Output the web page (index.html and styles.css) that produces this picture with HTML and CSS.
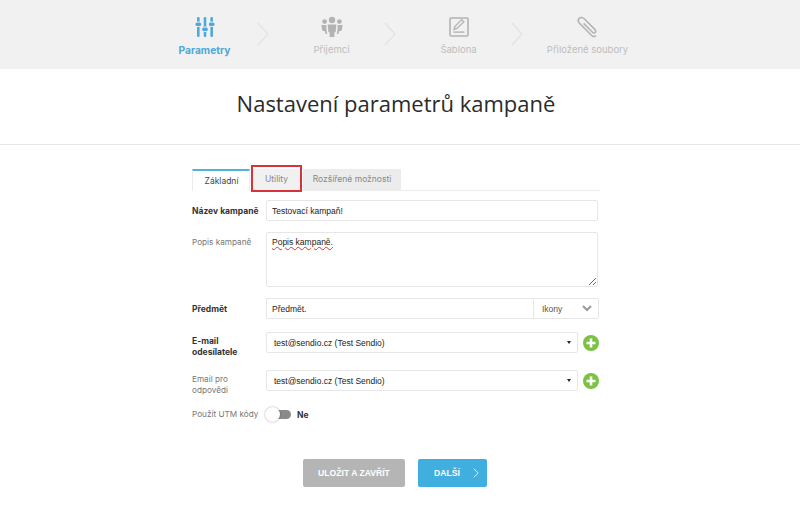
FILE: index.html
```html
<!DOCTYPE html>
<html lang="cs">
<head>
    <meta charset="UTF-8">
    <title>Nastavení parametrů kampaně</title>
    <link rel="stylesheet" href="styles.css">
</head>
<body>
    <!-- Steps -->
    <div class="steps">
        <div class="step active">
            <svg class="step-icon" width="24" height="24" viewBox="0 0 24 24">
                <g fill="#4fa8da">
                    <rect x="4" y="2" width="2.6" height="20" rx="1.2"/>
                    <rect x="10.7" y="2" width="2.6" height="20" rx="1.2"/>
                    <rect x="17.4" y="2" width="2.6" height="20" rx="1.2"/>
                    <rect x="2.5" y="7.6" width="5.6" height="3.4" rx="1.5"/>
                    <rect x="9.2" y="12.6" width="5.6" height="3.4" rx="1.5"/>
                    <rect x="15.9" y="7.6" width="5.6" height="3.4" rx="1.5"/>
                </g>
                <g fill="#f1f1f1">
                    <rect x="4" y="6.6" width="2.6" height="1"/>
                    <rect x="4" y="11" width="2.6" height="1"/>
                    <rect x="10.7" y="11.6" width="2.6" height="1"/>
                    <rect x="10.7" y="16" width="2.6" height="1"/>
                    <rect x="17.4" y="6.6" width="2.6" height="1"/>
                    <rect x="17.4" y="11" width="2.6" height="1"/>
                </g>
            </svg>
            <span>Parametry</span>
        </div>
        <svg class="chevron" width="12" height="24" viewBox="0 0 12 24"><path d="M1 1l10 11L1 23" fill="none" stroke="#e2e2e2" stroke-width="1.2"/></svg>
        <div class="step">
            <svg class="step-icon" width="24" height="24" viewBox="0 0 24 24">
                <g fill="#b3b3b3">
                    <circle cx="12" cy="5" r="3.2"/>
                    <circle cx="4.6" cy="6.6" r="2.4"/>
                    <circle cx="19.4" cy="6.6" r="2.4"/>
                    <path d="M7.6 9.4h8.8l-.8 7.6-1.2.4V22h-4.8v-4.6l-1.2-.4z"/>
                    <path d="M1.4 10h4.8l.6 7.4.8 1.6-2.4-.4-.4-2.4-2.6-.8z"/>
                    <path d="M22.6 10h-4.8l-.6 7.4-.8 1.6 2.4-.4.4-2.4 2.6-.8z"/>
                </g>
            </svg>
            <span>Příjemci</span>
        </div>
        <svg class="chevron" width="12" height="24" viewBox="0 0 12 24"><path d="M1 1l10 11L1 23" fill="none" stroke="#e2e2e2" stroke-width="1.2"/></svg>
        <div class="step">
            <svg class="step-icon" width="24" height="24" viewBox="0 0 24 24">
                <rect x="3" y="3" width="18" height="18" rx="1" fill="none" stroke="#b3b3b3" stroke-width="1.6"/>
                <path d="M7 14.4l1-3 6.6-6.8 2.2 2.2-6.8 6.6z" fill="none" stroke="#b3b3b3" stroke-width="1.3"/>
                <rect x="6.4" y="16.4" width="11" height="1.4" fill="#b3b3b3"/>
            </svg>
            <span>Šablona</span>
        </div>
        <svg class="chevron" width="12" height="24" viewBox="0 0 12 24"><path d="M1 1l10 11L1 23" fill="none" stroke="#e2e2e2" stroke-width="1.2"/></svg>
        <div class="step step-last">
            <svg class="step-icon" width="24" height="24" viewBox="0 0 24 24">
                <path d="M20 20.6c-1.4 1.4-3.2 1-4.6-.4L3.6 8.4C2 6.8 1.8 4.8 3.2 3.4s3.4-1.2 5 .4l10.6 10.6c1 1 1.2 2.2.4 3s-2 .6-3-.4L7.6 8.4" fill="none" stroke="#b3b3b3" stroke-width="1.5"/>
            </svg>
            <span>Přiložené soubory</span>
        </div>
    </div>

    <div class="page-title">
        <h1>Nastavení parametrů kampaně</h1>
    </div>

    <div class="content">
        <div class="tabs">
            <div class="tab tab-current">Základní</div>
            <div class="tab tab-marked">Utility</div>
            <div class="tab tab-more">Rozšířené možnosti</div>
        </div>

        <div class="row">
            <label class="label strong">Název kampaně</label>
            <input class="field" type="text" value="Testovací kampaň!">
        </div>
        <div class="row row-top">
            <label class="label">Popis kampaně</label>
            <textarea class="field area">Popis kampaně.</textarea>
        </div>
        <div class="row">
            <label class="label strong">Předmět</label>
            <div class="group">
                <input class="field group-input" type="text" value="Předmět.">
                <div class="addon">
                    <span>Ikony</span>
                    <svg width="10" height="7" viewBox="0 0 10 7"><path d="M1 1l4 4 4-4" fill="none" stroke="#999" stroke-width="2"/></svg>
                </div>
            </div>
        </div>
        <div class="row row-select row-sender">
            <label class="label strong">E-mail odesílatele</label>
            <select class="field pick"><option>test@sendio.cz (Test Sendio)</option></select>
            <svg class="plus" width="16" height="16" viewBox="0 0 16 16"><circle cx="8" cy="8" r="8" fill="#7cc242"/><path d="M8 3.5v9M3.5 8h9" stroke="#fff" stroke-width="2.6"/></svg>
        </div>
        <div class="row row-select">
            <label class="label">Email pro odpovědi</label>
            <select class="field pick"><option>test@sendio.cz (Test Sendio)</option></select>
            <svg class="plus" width="16" height="16" viewBox="0 0 16 16"><circle cx="8" cy="8" r="8" fill="#7cc242"/><path d="M8 3.5v9M3.5 8h9" stroke="#fff" stroke-width="2.6"/></svg>
        </div>
        <div class="row row-utm">
            <label class="label">Použít UTM kódy</label>
            <div class="switch"><div class="knob"></div></div>
            <span class="switch-text">Ne</span>
        </div>

        <div class="buttons">
            <button class="btn btn-grey">ULOŽIT A ZAVŘÍT</button>
            <button class="btn btn-blue">DALŠÍ
                <svg width="6" height="10" viewBox="0 0 6 10"><path d="M.7.7L5.2 5 .7 9.3" fill="none" stroke="#d2eefa" stroke-width="1"/></svg>
            </button>
        </div>
    </div>
</body>
</html>
```

FILE: styles.css
```css
body {
    margin: 0;
    background: #fff;
    font-family: "Open Sans", sans-serif;
    color: #333;
}
/* Steps */
.steps {
    height: 69px;
    background: #f1f1f1;
    display: flex;
    justify-content: center;
    padding-right: 8px;
    box-sizing: border-box;
}
.step {
    width: 115px;
    display: flex;
    flex-direction: column;
    align-items: center;
    padding-top: 15px;
    box-sizing: border-box;
    font-family: "Inter", sans-serif;
    font-size: 9.5px;
    line-height: 12px;
    color: #bdbdbd;
}
.step-last {
    margin-left: 2px;
}
.step-icon {
    margin-bottom: 5px;
}
.step.active {
    color: #4fa8da;
    font-weight: 700;
    font-size: 10.2px;
}
.chevron {
    margin: 22px 5px 0 -5px;
}
/* Title */
.page-title {
    padding: 0 8px 8px 0;
    height: 67px;
    border-bottom: 1px solid #e8e8e8;
    display: flex;
    align-items: center;
    justify-content: center;
}
.page-title h1 {
    margin: 0;
    font-size: 22px;
    font-weight: 400;
    color: #2b2b2b;
}
/* Form */
.content {
    width: 408px;
    margin: 0 auto;
    padding: 24px 8px 0 0;
}
.tabs {
    display: flex;
    height: 21px;
    border-bottom: 1px solid #ececec;
    margin-bottom: 9px;
}
.tab {
    font-family: "Inter", sans-serif;
    font-size: 8.5px;
    color: #888;
    background: #ececec;
    line-height: 21px;
    margin-left: 2px;
    position: relative;
    box-sizing: border-box;
    text-align: center;
}
.tab-current {
    width: 58px;
    margin-left: 0;
    padding-left: 1px;
    background: #fff;
    color: #444;
    border-top: 2px solid #4fb3dc;
    border-left: 1px solid #ececec;
    border-right: 1px solid #ececec;
    height: 22px;
    line-height: 20px;
}
.tab-marked {
    width: 49px;
    background: #f1f1f1;
}
.tab-more {
    width: 98px;
}
.tab-marked::after {
    content: "";
    position: absolute;
    left: -1px;
    right: -1px;
    top: -4px;
    bottom: -2px;
    border: 2px solid #d8333a;
}
.row {
    display: flex;
    align-items: center;
    margin-bottom: 11px;
}
.row-top {
    align-items: flex-start;
}
.row-top .label {
    padding-top: 5px;
}
.row-select {
    align-items: flex-start;
    margin-bottom: 12px;
}
.row-select .plus {
    margin-top: 3px;
}
.row-sender {
    margin-top: 13px;
}
.row-utm {
    margin-top: 13px;
}
.label {
    width: 74px;
    flex: none;
    font-family: "Inter", sans-serif;
    font-size: 8.2px;
    line-height: 11px;
    color: #777;
}
.label.strong {
    font-size: 8.5px;
    color: #333;
    font-weight: 700;
    padding-top: 2px;
}
.row-select .label,
.row-select .label.strong {
    box-sizing: border-box;
    padding: 4px 12px 0 0;
}
.field {
    box-sizing: border-box;
    width: 332px;
    height: 21px;
    border: 1px solid #e6e6e6;
    border-radius: 2px;
    background: #fff;
    padding: 0 5px;
    font-family: "Liberation Sans", sans-serif;
    font-size: 8.5px;
    color: #222;
    outline: none;
}
.area {
    height: 55px;
    padding-top: 4px;
    text-decoration: underline wavy #d33;
    display: block;
}
.group {
    display: flex;
    width: 333px;
}
.group-input {
    width: 267px;
    border-right: none;
    border-radius: 2px 0 0 2px;
}
.addon {
    flex: 1;
    display: flex;
    align-items: center;
    justify-content: space-between;
    padding: 0 6px 0 8px;
    border: 1px solid #e6e6e6;
    border-radius: 0 2px 2px 0;
    font-family: "Liberation Sans", sans-serif;
    font-size: 8.5px;
    color: #555;
}
.pick {
    width: 312px;
    padding-left: 7px;
    appearance: none;
    background: #fff url("data:image/svg+xml,%3Csvg xmlns='http://www.w3.org/2000/svg' width='4' height='3'%3E%3Cpath d='M0 0h4L2 3z' fill='%23222'/%3E%3C/svg%3E") no-repeat right 6px center;
}
.plus {
    margin-left: 5px;
}
.switch {
    width: 25px;
    height: 9px;
    background: #8a8a8a;
    border-radius: 5px;
    position: relative;
}
.knob {
    position: absolute;
    left: -1px;
    top: -3px;
    width: 15px;
    height: 15px;
    border-radius: 50%;
    background: #fff;
    box-shadow: 0 0 2px rgba(0, 0, 0, 0.4);
}
.switch-text {
    margin-left: 6px;
    font-family: "Inter", sans-serif;
    font-size: 8.5px;
    font-weight: 700;
}
.buttons {
    display: flex;
    gap: 13px;
    margin-top: 39px;
    padding-left: 111px;
}
.btn {
    height: 28px;
    border: none;
    border-radius: 2px;
    color: #fff;
    font-family: "Liberation Sans", sans-serif;
    font-size: 8.6px;
    font-weight: 700;
}
.btn-grey {
    width: 102px;
    background: #b5b5b5;
}
.btn-blue {
    width: 69px;
    background: #41aee0;
    display: flex;
    align-items: center;
    gap: 13px;
    padding-left: 16px;
}
```
